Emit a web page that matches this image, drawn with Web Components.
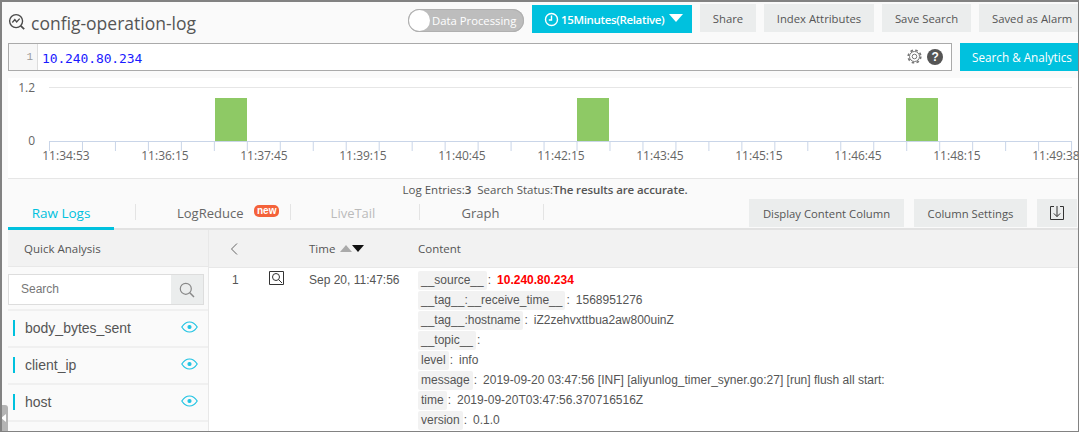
<!DOCTYPE html>
<html>
<head>
<meta charset="utf-8">
<title>config-operation-log</title>
<style>
html,body{margin:0;padding:0;background:#fafafa;}
body{font-family:"Open Sans","Liberation Sans",sans-serif;color:#555;overflow:hidden;}
</style>
</head>
<body>
<log-page></log-page>
<script>
class SlsButton extends HTMLElement {
    constructor() {
        super();
        this.attachShadow({ mode: 'open' }).innerHTML = `
<style>
:host{display:flex;align-items:center;justify-content:center;box-sizing:border-box;height:28px;background:#ebeded;color:#555;font-size:11.3px;white-space:nowrap;cursor:pointer;}
:host([primary]){background:#00c1de;color:#fff;}
</style>
<slot></slot>`;
    }
}
customElements.define('sls-button', SlsButton);

class LogHeader extends HTMLElement {
    constructor() {
        super();
        this.attachShadow({ mode: 'open' }).innerHTML = `
<style>
:host{display:flex;align-items:flex-start;height:41px;padding-left:6px;box-sizing:border-box;}
.title{display:flex;align-items:center;gap:5px;font-size:17.5px;color:#555;flex:1;height:41px;margin-top:0;}
.title svg{display:block;margin-top:-2px;}
.switch{display:flex;align-items:center;box-sizing:border-box;width:116px;height:23px;border-radius:12px;background:#bdbdbd;color:#fff;font-size:11.3px;padding-left:1px;gap:2px;margin:7px 8px 0 0;box-shadow:inset 0 0 0 1px #b0b0b0;}
.knob{width:21px;height:21px;border-radius:50%;background:#fff;}
.time{width:160px;margin:3px 8px 0 0;height:28px;justify-content:flex-start;padding-left:12px;}
.time span{display:flex;align-items:center;gap:1px;font-size:11.5px;font-weight:600;letter-spacing:-.35px;}
.time svg{margin-right:1px;}
.time b{display:block;width:0;height:0;border:7px solid transparent;border-top:8px solid #fff;border-bottom:0;margin:-2px 0 0 4px;}
.btns{display:flex;gap:8px;margin-top:2px;}
</style>
<div class="title">
  <svg width="18" height="18" viewBox="0 0 20 20" fill="none" stroke="#4a4a4a" stroke-width="1.5"><circle cx="9" cy="9" r="7.2"/><path d="M4.8 10.6 7.6 7.4 9.6 10 13 6.2"/><path d="M14.2 14.2 18 18" stroke-width="1.9"/></svg>
  <span>config-operation-log</span>
</div>
<div class="switch"><div class="knob"></div><span>Data Processing</span></div>
<sls-button class="time" primary><span>
  <svg width="15" height="15" viewBox="0 0 15 15" fill="none" stroke="#fff" stroke-width="1.4"><circle cx="7.5" cy="7.5" r="6"/><path d="M7.5 3.6V8H4.8"/></svg>
  15Minutes(Relative)<b></b></span></sls-button>
<div class="btns">
  <sls-button style="width:56px">Share</sls-button>
  <sls-button style="width:110px">Index Attributes</sls-button>
  <sls-button style="width:89px">Save Search</sls-button>
  <sls-button style="width:99px;justify-content:flex-start;padding-left:13px">Saved as Alarm</sls-button>
</div>`;
    }
}
customElements.define('log-header', LogHeader);

class QueryBar extends HTMLElement {
    constructor() {
        super();
        this.attachShadow({ mode: 'open' }).innerHTML = `
<style>
:host{display:flex;height:28px;padding-left:6px;gap:8px;}
.box{display:flex;align-items:stretch;box-sizing:border-box;width:945px;height:28px;border:1px solid #aaa;background:#fff;}
.gutter{width:29px;box-sizing:border-box;background:#f7f7f7;border-right:1px solid #ddd;color:#999;font:11px/26px "Liberation Mono",monospace;text-align:right;padding-right:4px;}
.q{flex:1;font:13px/29px "DejaVu Sans Mono","Liberation Mono",monospace;color:#1a1aff;padding-left:4px;letter-spacing:-.12px;}
.tools{display:flex;align-items:center;gap:5px;padding-right:8px;}
.tools svg{display:block;margin-top:-2px;}
.help{width:16px;height:16px;border-radius:50%;background:#555;color:#fff;font:bold 12px/16px "Liberation Sans",sans-serif;text-align:center;}
sls-button{width:118px;font-size:11.7px;justify-content:flex-start;padding-left:12px;}
</style>
<div class="box">
  <div class="gutter">1</div>
  <div class="q">10.240.80.234</div>
  <div class="tools">
    <svg width="15" height="15" viewBox="0 0 15 15" fill="none" stroke="#777"><circle cx="7.5" cy="7.5" r="5"/><circle cx="7.5" cy="7.5" r="2.3"/><circle cx="7.5" cy="7.5" r="6.3" stroke-width="1.6" stroke-dasharray="2.6 2.35"/></svg>
    <div class="help">?</div>
  </div>
</div>
<sls-button primary>Search &amp; Analytics</sls-button>`;
    }
}
customElements.define('query-bar', QueryBar);

class HistChart extends HTMLElement {
    constructor() {
        super();
        const labels = ['11:34:53','11:36:15','11:37:45','11:39:15','11:40:45','11:42:15','11:43:45','11:45:15','11:46:45','11:48:15','11:49:38'];
        let ticks = '';
        for (let i = 0; i <= 31; i++) {
            const x = 41.5 + i * 32.97;
            ticks += `<path d="M${x} 63V73"/>`;
        }
        const text = labels.map((l, i) => `<text x="${58 + i * 99}" y="82" text-anchor="middle">${l}</text>`).join('');
        const bars = [207, 569, 898].map(x => `<rect x="${x}" y="20" width="32" height="43" fill="#8ec965"/>`).join('');
        this.attachShadow({ mode: 'open' }).innerHTML = `
<style>
:host{display:block;height:101px;margin:7px 0 0 6px;background:#fff;border-bottom:1px solid #e6e6e6;box-sizing:border-box;}
svg{display:block;}
text{font:12px "Open Sans",sans-serif;fill:#666;}
</style>
<svg width="1071" height="100">
  <path d="M41 9.5H1064" stroke="#e6e6e6"/>
  ${bars}
  <g stroke="#c9d5e8" fill="none">
    <path d="M41.5 63.5H1064"/>
    ${ticks}
  </g>
  <text x="27" y="14" text-anchor="end">1.2</text>
  <text x="27" y="67" text-anchor="end">0</text>
  ${text}
</svg>`;
    }
}
customElements.define('hist-chart', HistChart);

class ResultTabs extends HTMLElement {
    constructor() {
        super();
        this.attachShadow({ mode: 'open' }).innerHTML = `
<style>
:host{display:block;box-sizing:border-box;height:51px;margin-left:6px;background:#fafafa;}
.status{height:19px;font-size:11.5px;line-height:21px;text-align:center;color:#555;margin-left:4px;white-space:pre;}
.status b{font-weight:600;letter-spacing:-.1px;}
.bar{display:flex;height:32px;box-sizing:border-box;border-bottom:2px solid #e2e2e2;}
.tab{box-sizing:border-box;height:30px;display:flex;align-items:center;justify-content:center;font-size:13px;color:#666;position:relative;}
.tab.on{color:#00c1de;font-size:13.5px;height:32px;border-bottom:3px solid #00c1de;width:106px;}
.tab.off{color:#bbb;padding-right:4px;}
.sep{width:1px;height:16px;background:#e4e4e4;margin-top:6px;}
.new{position:absolute;left:118px;top:7px;background:#f4623a;color:#fff;border-radius:5px;font:bold 10px/12px "Liberation Sans",sans-serif;padding:0 3px;}
.right{margin-left:auto;display:flex;gap:10px;padding-right:1px;}
.right sls-button{margin-top:1px;}
</style>
<div class="status">Log Entries:<b>3</b>  Search Status:<b>The results are accurate.</b></div>
<div class="bar">
  <div class="tab on">Raw Logs</div>
  <div class="sep" style="margin-left:21px"></div>
  <div class="tab" style="width:154px;justify-content:flex-start;padding-left:41px">LogReduce<span class="new">new</span></div>
  <div class="sep"></div>
  <div class="tab off" style="width:128px">LiveTail</div>
  <div class="sep"></div>
  <div class="tab" style="width:123px;padding-right:2px">Graph</div>
  <div class="sep"></div>
  <div class="right">
    <sls-button style="width:155px">Display Content Column</sls-button>
    <sls-button style="width:113px">Column Settings</sls-button>
    <sls-button style="width:40px"><svg width="16" height="16" viewBox="0 0 16 16" fill="none" stroke="#333" style="display:block"><path d="M5 1.5H1.5V14.5H14.5V1.5H11"/><path d="M8 1V11.5M4.8 8.4 8 11.6 11.2 8.4"/></svg></sls-button>
  </div>
</div>`;
    }
}
customElements.define('result-tabs', ResultTabs);

class FieldRow extends HTMLElement {
    constructor() {
        super();
        this.attachShadow({ mode: 'open' }).innerHTML = `
<style>
:host{display:flex;align-items:center;box-sizing:border-box;height:37px;border-bottom:2px solid #f0f0f0;padding:0 10px 2px 5px;font:14px "Liberation Sans",sans-serif;color:#555;}
.mark{width:2px;height:16px;background:#00c1de;margin-right:10px;}
.name{flex:1;}
svg{display:block;margin-top:-1px;}
</style>
<div class="mark"></div>
<div class="name"><slot></slot></div>
<svg width="17" height="12" viewBox="0 0 17 12" fill="none" stroke="#1fc3e3" stroke-width="1.2"><path d="M.8 6C3 2.6 5.6 1 8.5 1S14 2.6 16.2 6C14 9.4 11.4 11 8.5 11S3 9.4.8 6Z"/><circle cx="8.5" cy="6" r="1.5" fill="#1fc3e3"/></svg>`;
    }
}
customElements.define('field-row', FieldRow);

class QuickAnalysis extends HTMLElement {
    constructor() {
        super();
        this.attachShadow({ mode: 'open' }).innerHTML = `
<style>
:host{display:block;position:relative;box-sizing:border-box;width:201px;height:202px;border-right:1px solid #e8e8e8;background:#fafafa;}
.head{height:37px;box-sizing:border-box;background:#f2f2f2;border-bottom:1px solid #e8e8e8;padding-left:16px;font-size:11.5px;line-height:38px;color:#555;}
.search{display:flex;box-sizing:border-box;width:196px;height:31px;margin:7px 0 4px;border:1px solid #ddd;background:#fff;}
.search span{flex:1;padding-left:12px;font:12px/29px "Liberation Sans",sans-serif;color:#777;}
.search div{width:32px;background:#ebeded;display:flex;align-items:center;justify-content:center;}
.list{border-top:2px solid #f0f0f0;}
</style>
<div class="head">Quick Analysis</div>
<div class="search"><span>Search</span><div><svg width="16" height="16" viewBox="0 0 16 16" fill="none" stroke="#888" stroke-width="1.2" style="display:block"><circle cx="6.8" cy="6.8" r="5.5"/><path d="M10.8 10.8 15 15" stroke-width="1.5"/></svg></div></div>
<div class="list"><slot></slot></div>`;
    }
}
customElements.define('quick-analysis', QuickAnalysis);

class LogField extends HTMLElement {
    constructor() {
        super();
        this.attachShadow({ mode: 'open' }).innerHTML = `
<style>
:host{display:flex;align-items:center;height:20px;font:12px "Liberation Sans",sans-serif;color:#555;white-space:nowrap;}
.k{background:#f2f2f2;border-radius:2px;padding:0 3px;height:19px;line-height:19px;}
.c{margin:0 6px 0 1px;}
</style>
<span class="k"></span><span class="c">:</span><span class="v"><slot></slot></span>`;
        this.shadowRoot.querySelector('.k').textContent = this.getAttribute('key');
    }
}
customElements.define('log-field', LogField);

class LogTable extends HTMLElement {
    constructor() {
        super();
        this.attachShadow({ mode: 'open' }).innerHTML = `
<style>
:host{display:block;flex:1;min-width:0;background:#fff;font:12px "Liberation Sans",sans-serif;color:#555;}
.head,.row{display:grid;grid-template-columns:100px 109px 1fr;}
.head{height:38px;box-sizing:border-box;background:#f2f2f2;border-bottom:1px solid #e8e8e8;align-items:center;font:11.5px "Open Sans",sans-serif;}
.back{padding-left:21px;}
.back svg,.sort svg{display:block;}
.sort{display:flex;align-items:center;gap:5px;}
.row{padding-top:2px;}
.num{display:grid;grid-template-columns:37px 1fr;align-items:start;padding:3px 0 0 23px;}
.ico{margin-top:-2px;}
.time{padding-top:3px;}
strong{color:#f00;font-size:12px;}
</style>
<div class="head">
  <div class="back"><svg width="8" height="14" viewBox="0 0 8 14" fill="none" stroke="#666"><path d="M7 1.5 1.5 7 7 12.5"/></svg></div>
  <div class="sort">Time<svg width="25" height="7" viewBox="0 0 25 7"><path d="M0 7 6 0 12 7Z" fill="#aaa"/><path d="M12 0H24L18 7Z" fill="#111"/></svg></div>
  <div>Content</div>
</div>
<div class="row">
  <div class="num"><span>1</span>
    <svg class="ico" width="15" height="14" viewBox="0 0 15 14" fill="none" stroke="#333"><path d="M.5.5H14.5V13.5H.5Z"/><circle cx="7" cy="6" r="3.5"/><path d="M9.5 8.5 13 12"/></svg>
  </div>
  <div class="time">Sep 20, 11:47:56</div>
  <div>
    <log-field key="__source__"><strong>10.240.80.234</strong></log-field>
    <log-field key="__tag__:__receive_time__">1568951276</log-field>
    <log-field key="__tag__:hostname">iZ2zehvxttbua2aw800uinZ</log-field>
    <log-field key="__topic__"></log-field>
    <log-field key="level">info</log-field>
    <log-field key="message">2019-09-20 03:47:56 [INF] [aliyunlog_timer_syner.go:27] [run] flush all start:</log-field>
    <log-field key="time">2019-09-20T03:47:56.370716516Z</log-field>
    <log-field key="version">0.1.0</log-field>
  </div>
</div>`;
    }
}
customElements.define('log-table', LogTable);

class LogPage extends HTMLElement {
    constructor() {
        super();
        this.attachShadow({ mode: 'open' }).innerHTML = `
<style>
:host{display:block;position:relative;box-sizing:border-box;width:1079px;height:432px;overflow:hidden;border:solid #828282;border-width:2px 1px 1px 2px;background:#fafafa;}
.body{display:flex;height:204px;margin-left:6px;overflow:hidden;}
.handle{position:absolute;left:-2px;bottom:0;width:8px;height:26px;background:#b4b4b4;border-radius:0 3px 0 0;}
.handle::after{content:"";position:absolute;left:1px;top:9px;border:4px solid transparent;border-right:5px solid #fff;border-left:0;}
</style>
<log-header></log-header>
<query-bar></query-bar>
<hist-chart></hist-chart>
<result-tabs></result-tabs>
<div class="body">
  <quick-analysis>
    <field-row>body_bytes_sent</field-row>
    <field-row>client_ip</field-row>
    <field-row>host</field-row>
  </quick-analysis>
  <log-table></log-table>
</div>
<div class="handle"></div>`;
    }
}
customElements.define('log-page', LogPage);
</script>
</body>
</html>
